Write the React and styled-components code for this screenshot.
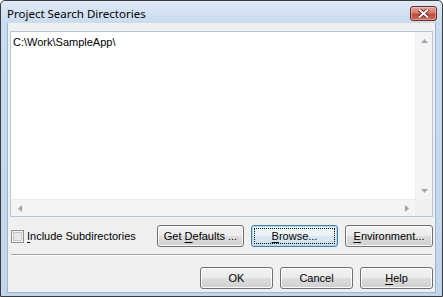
import React from 'react';
import styled, { createGlobalStyle, css } from 'styled-components';

const GlobalStyle = createGlobalStyle`
    html, body {
        margin: 0;
        padding: 0;
        background: #ffffff;
    }
    * {
        box-sizing: border-box;
    }
`

const Window = styled.div`
    width: 443px;
    height: 297px;
    border: 1px solid #3b3b3b;
    border-radius: 5px 5px 0 0;
    background: linear-gradient(to bottom, #dfe9f6 0px, #c9dbef 22px, #c1d5ec 100%);
    display: flex;
    flex-direction: column;
    padding: 0 6px 3px 6px;
    font-family: "Liberation Sans", Arial, sans-serif;
    font-size: 11px;
    color: #000000;
    overflow: hidden;
`

const TitleBar = styled.div`
    height: 22px;
    display: flex;
    align-items: center;
    justify-content: space-between;
`

const Title = styled.div`
    font-family: "Segoe UI", "Noto Sans", sans-serif;
    font-size: 11.5px;
    color: #000000;
    margin-top: 3px;
`

const CloseButton = styled.div`
    width: 27px;
    height: 15px;
    margin-top: 3px;
    margin-right: -1px;
    border: 1px solid #6d2a24;
    border-radius: 3px;
    background: linear-gradient(to bottom, #e8a196 0%, #d77a6c 45%, #c24a3a 55%, #cf6a59 100%);
    box-shadow: inset 0 0 0 1px rgba(255, 255, 255, 0.35);
    display: flex;
    align-items: center;
    justify-content: center;
`

const Client = styled.div`
    flex: 1;
    background: #f0f0f0;
    border: 1px solid #9fb4cc;
    border-top: none;
    padding: 8px 2px 0 2px;
    display: flex;
    flex-direction: column;
`

const ListBox = styled.div`
    height: 186px;
    border: 1px solid #a9c7e6;
    background: #ffffff;
    display: grid;
    grid-template-columns: 1fr 17px;
    grid-template-rows: 1fr 17px;
`

const ListContent = styled.div`
    padding: 3px 2px;
    line-height: 14px;
    white-space: nowrap;
`

const ScrollV = styled.div`
    background: #f4f4f4;
    border-left: 1px solid #ececec;
    display: flex;
    flex-direction: column;
    justify-content: space-between;
    align-items: center;
`

const ScrollH = styled.div`
    background: #f4f4f4;
    border-top: 1px solid #ececec;
    display: flex;
    justify-content: space-between;
    align-items: center;
`

const ArrowCell = styled.div`
    width: 17px;
    height: 17px;
    display: flex;
    align-items: center;
    justify-content: center;
`

const Corner = styled.div`
    background: #f0f0f0;
`

const Row = styled.div`
    display: flex;
    align-items: center;
    gap: 7px;
    margin-top: ${props => props.top}px;
    justify-content: ${props => props.justify || 'flex-start'};
`

const CheckLabel = styled.label`
    display: flex;
    align-items: center;
    gap: 3px;
    margin-left: 1px;
    margin-right: auto;
    white-space: nowrap;
    flex-shrink: 0;
`

const CheckBox = styled.span`
    width: 13px;
    height: 13px;
    flex-shrink: 0;
    border: 1px solid #8e8f8f;
    background: linear-gradient(135deg, #dcdcdc 0%, #f4f4f4 100%);
    box-shadow: inset 0 0 0 1px #f4f4f4, inset 0 0 0 2px #c8c8c8;
`

const Button = styled.div`
    width: ${props => props.w}px;
    height: 22px;
    flex-shrink: 0;
    border: 1px solid ${props => props.focused ? '#3c7fb1' : '#707070'};
    border-radius: 3px;
    background: ${props => props.focused
        ? 'linear-gradient(to bottom, #f4f9fc 0%, #eaf3f9 48%, #d9e9f4 52%, #cfe2ef 100%)'
        : 'linear-gradient(to bottom, #f2f2f2 0%, #ebebeb 48%, #dddddd 52%, #cfcfcf 100%)'};
    box-shadow: inset 0 0 0 1px ${props => props.focused ? '#a9dcf7' : '#fcfcfc'};
    display: flex;
    align-items: center;
    justify-content: center;
    position: relative;
    color: #000000;
    white-space: pre;

    ${props => props.focused && css`
        &::after {
            content: '';
            position: absolute;
            inset: 2px;
            border: 1px dotted #000000;
        }
    `}
`

const Caption = styled.span`
    white-space: pre;
`

const Key = styled.span`
    text-decoration: underline;
    text-underline-offset: 2px;
`

const Separator = styled.div`
    height: 2px;
    margin: 7px 1px 0 1px;
    border-top: 1px solid #a0a0a0;
    border-bottom: 1px solid #ffffff;
`

const Arrow = ({ dir }) => {
    const pts = {
        up: '0,4 7,4 3.5,0',
        down: '0,0 7,0 3.5,4',
        left: '4,0 4,7 0,3.5',
        right: '0,0 0,7 4,3.5',
    }
    const vertical = dir === 'up' || dir === 'down'
    return (
        <svg width={vertical ? 7 : 4} height={vertical ? 4 : 7} viewBox={vertical ? '0 0 7 4' : '0 0 4 7'}>
            <polygon points={pts[dir]} fill="#a3a3a3" />
        </svg>
    )
}

const App = () => {
    return (
        <>
            <GlobalStyle />
            <Window>
                <TitleBar>
                    <Title>Project Search Directories</Title>
                    <CloseButton>
                        <svg width="11" height="9" viewBox="0 0 11 9">
                            <path d="M1.5 1 L9.5 8 M9.5 1 L1.5 8" stroke="#4a1410" strokeWidth="3.4" strokeLinecap="square" />
                            <path d="M1.5 1 L9.5 8 M9.5 1 L1.5 8" stroke="#ffffff" strokeWidth="2" strokeLinecap="square" />
                        </svg>
                    </CloseButton>
                </TitleBar>
                <Client>
                    <ListBox>
                        <ListContent>C:\Work\SampleApp\</ListContent>
                        <ScrollV>
                            <ArrowCell><Arrow dir="up" /></ArrowCell>
                            <ArrowCell><Arrow dir="down" /></ArrowCell>
                        </ScrollV>
                        <ScrollH>
                            <ArrowCell><Arrow dir="left" /></ArrowCell>
                            <ArrowCell><Arrow dir="right" /></ArrowCell>
                        </ScrollH>
                        <Corner />
                    </ListBox>
                    <Row top={8}>
                        <CheckLabel>
                            <CheckBox />
                            <Caption><Key>I</Key>nclude Subdirectories</Caption>
                        </CheckLabel>
                        <Button w={87}><Caption>Get <Key>D</Key>efaults ...</Caption></Button>
                        <Button w={87} focused><Caption><Key>B</Key>rowse...</Caption></Button>
                        <Button w={88}><Caption><Key>E</Key>nvironment...</Caption></Button>
                    </Row>
                    <Separator />
                    <Row top={11} justify="flex-end">
                        <Button w={73}><Caption>OK</Caption></Button>
                        <Button w={73}><Caption>Cancel</Caption></Button>
                        <Button w={73}><Caption><Key>H</Key>elp</Caption></Button>
                    </Row>
                </Client>
            </Window>
        </>
    );
}

export default App
